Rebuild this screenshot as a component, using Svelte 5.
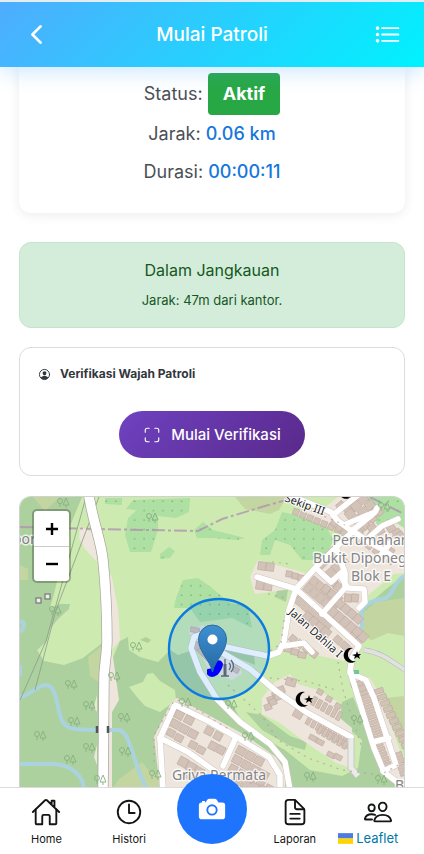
<script>
  const tabs = [
    { label: 'Home', icon: 'home' },
    { label: 'Histori', icon: 'time' },
    { label: 'Kamera', icon: 'camera' },
    { label: 'Laporan', icon: 'document' },
    { label: '', icon: 'people' }
  ];

  // Rows of houses: start point, step, count, house size, rotation
  const rows = [
    [341, 506, 8, 5, 2, 8, 8, -40], [350, 514, 7, 6, 3, 9, 8, -40], [356, 506, 7, 6, 3, 9, 8, -40], [363, 499, 7, 6, 3, 9, 8, -40],
    [380, 512, -7, 7, 4, 7, 6, -40], [372, 528, 8, 3, 2, 8, 7, -30], [391, 528, 6, 5, 2, 8, 7, -35], [384, 545, 8, -5, 3, 7, 6, -35],
    [362, 541, 7, 5, 5, 6, 6, 35], [370, 536, 7, 5, 4, 6, 6, 35],
    [296, 512, 7, 3, 7, 6, 6, 20], [334, 523, 5, 5, 3, 6, 6, 40], [262, 566, 8, 1, 2, 8, 8, 8], [260, 585, 8, 1, 2, 8, 9, 8], [289, 574, 6, 2, 3, 6, 6, 10],
    [322, 563, 6, -6, 3, 8, 9, -42], [331, 573, 6, -6, 3, 8, 9, -42],
    [308, 588, 6, 5, 5, 7, 9, 40], [314, 581, 6, 5, 4, 7, 8, 40], [326, 589, 6, 5, 3, 7, 8, 40], [333, 582, 5, 5, 2, 7, 8, 40],
    [299, 601, 7, 6, 5, 8, 8, 40], [308, 617, 6, 5, 4, 9, 8, 40], [333, 612, 6, 5, 6, 8, 9, 42], [340, 604, 6, 5, 4, 8, 8, 42], [348, 598, 7, 0, 2, 7, 8, 5],
    [293, 639, 7, 5, 4, 7, 7, 40], [288, 649, 7, 3, 3, 8, 6, 10], [338, 640, 7, 6, 2, 8, 7, 42], [352, 637, 5, 5, 2, 7, 7, 42],
    [271, 700, 5, -5, 3, 7, 7, -20], [268, 707, 5, -5, 3, 7, 6, -20], [291, 682, 6, 2, 1, 10, 8, 15], [298, 714, 6, 4, 1, 9, 8, 30],
    [314, 701, 5, 3, 6, 4, 9, 28], [309, 720, 5, 3, 9, 4, 10, 28], [320, 730, 5, 3, 6, 4, 8, 28], [313, 738, 7, 4, 2, 8, 5, 28], [331, 755, 7, 2, 2, 8, 5, 28], [320, 692, 9, 7, 3, 6, 5, 30],
    [357, 684, 3, 5, 3, 12, 5, -20], [364, 697, 2, 5, 9, 15, 4, -17], [377, 745, 2, 5, 5, 12, 4, -17], [379, 691, 3, 6, 12, 9, 5, -18], [398, 755, 2, 6, 4, 8, 5, -18],
    [179, 715, 10, 5, 2, 9, 8, 28], [175, 724, 9, 5, 3, 9, 8, 28], [171, 733, 8, 5, 2, 8, 7, 28], [193, 745, 8, 5, 2, 8, 7, 28],
    [209, 731, 9, 5, 2, 8, 8, 28], [213, 746, 8, 4, 2, 8, 8, 28], [183, 762, 8, 5, 3, 9, 9, 28], [190, 775, 9, 4, 3, 8, 9, 28],
    [241, 751, 9, 5, 3, 9, 8, 28], [237, 760, 9, 5, 4, 9, 8, 28], [233, 769, 9, 5, 5, 8, 8, 28], [236, 781, 9, 3, 4, 8, 8, 28],
    [195, 630, 7, 1, 1, 9, 5, 10], [197, 646, 5, 5, 3, 7, 7, 45], [236, 670, 3, -6, 2, 6, 5, 30]
  ];
  const houses = rows.flatMap(([x, y, dx, dy, n, w, h, a]) =>
    Array.from({ length: n }, (_, i) => ({ x: x + dx * i, y: y + dy * i, w, h, a }))
  );

  const trees = [
    [63, 503], [152, 518], [384, 507], [55, 611], [71, 685], [89, 706], [74, 722], [40, 736], [89, 748], [70, 760], [100, 780],
    [136, 647], [114, 677], [124, 718], [125, 752], [155, 775], [185, 703], [231, 705], [248, 737], [357, 720], [310, 777], [381, 780]
  ];

  const roads = [
    'M284 493L331 512L337 520L353 532', 'M333 515L358 495', 'M346 524L375 512L377 508', 'M352 531L374 513',
    'M353 531L366 540L380 548L404 564', 'M366 540L382 526L398 519', 'M376 562L390 543L404 540', 'M257 577L296 589', 'M296 589L318 565L352 532',
    'M296 589L325 615L359 646L352 658L350 671L362 710L374 748L384 772L402 786', 'M319 571L331 582L342 572',
    'M336 547L345 573L345 588L322 614', 'M340 575L348 588L364 589L365 602L359 608', 'M296 589L289 610L284 641',
    'M350 673L366 680L374 698L396 765L383 771', 'M373 742L389 738',
    'M284 641L279 652L268 656L244 651L208 643L202 634L194 637L191 648L200 672L217 699L240 722L270 744L285 762L290 790',
    'M214 648L250 669L276 691L306 712L351 737', 'M284 646L304 643L312 652',
    'M160 738L175 705L212 723L240 739L269 757L280 775L280 790', 'M160 738L163 790', 'M160 738L188 752L216 772', 'M236 737L223 766'
  ];

  const dots = [
    'M105 498L122 498L122 505L105 504Z', 'M133 500L190 498L189 512L176 518L158 516L158 530L151 552L130 552L125 535L128 518L137 510L126 509Z',
    'M160 554L169 547L175 551L170 558L160 559Z', 'M194 530L203 522L213 530L245 538L238 540L212 538L197 538Z',
    'M176 598L183 580L198 578L212 588L230 603L248 606L252 628L232 618L200 622L190 608L174 608Z',
    'M282 512L296 515L326 527L334 540L322 560L302 560L290 545L275 540L270 555L260 555L262 540L275 530Z',
    'M360 497L404 497L404 528L390 524L375 528L368 510Z'
  ];

  let active = $state('Home');
  let zoom = $state(1);
</script>

{#snippet icon(name)}
  <svg class="icon" viewBox="0 0 512 512" aria-hidden="true">
    {#if name === 'back'}
      <path stroke-width="48" d="M328 112L184 256l144 144" />
    {:else if name === 'list'}
      <path d="M160 144h288M160 256h288M160 368h288" />
      <circle cx="80" cy="144" r="16" /><circle cx="80" cy="256" r="16" /><circle cx="80" cy="368" r="16" />
    {:else if name === 'home'}
      <path d="M80 212v236a16 16 0 0016 16h96V328a24 24 0 0124-24h80a24 24 0 0124 24v136h96a16 16 0 0016-16V212" />
      <path d="M480 256L266.89 52c-5-5.28-16.69-5.34-21.78 0L32 256M400 179V64h-48v69" />
    {:else if name === 'time'}
      <circle cx="256" cy="256" r="192" /><path d="M256 128v144h96" />
    {:else if name === 'document'}
      <path d="M416 221.25V416a48 48 0 01-48 48H144a48 48 0 01-48-48V96a48 48 0 0148-48h98.75a32 32 0 0122.62 9.37l141.26 141.26a32 32 0 019.37 22.62z" />
      <path d="M256 56v120a32 32 0 0032 32h120M176 288h160M176 368h160" />
    {:else if name === 'people'}
      <path d="M402 168c-2.93 40.67-33.1 72-66 72s-63.12-31.32-66-72c-3-42.31 26.37-72 66-72s69 30.46 66 72z" />
      <path d="M336 304c-65.17 0-127.84 32.37-143.54 95.41-2.08 8.34 3.15 16.59 11.72 16.59h263.65c8.57 0 13.77-8.25 11.72-16.59C463.85 335.36 401.18 304 336 304z" />
      <path d="M200 185.94c-2.34 32.48-26.72 58.06-53 58.06s-50.7-25.57-53-58.06C91.61 152.15 115.34 128 147 128s55.39 24.77 53 57.94z" />
      <path d="M206 306c-18.05-8.27-37.93-11.45-59-11.45-52 0-102.1 25.85-114.65 76.2-1.65 6.66 2.53 13.25 9.37 13.25H154" />
    {:else if name === 'camera'}
      <g fill="currentColor" stroke="none">
        <circle cx="256" cy="272" r="64" />
        <path d="M432 144h-59c-3 0-6.72-1.94-9.62-5l-25.94-40.94a15.52 15.52 0 00-1.37-1.85C327.11 85.76 315 80 302 80h-92c-13 0-25.11 5.76-34.07 16.21a15.52 15.52 0 00-1.37 1.85l-25.94 41c-2.22 2.42-5.34 5-8.62 5v-8a16 16 0 00-16-16h-24a16 16 0 00-16 16v8h-4a48.05 48.05 0 00-48 48V384a48.05 48.05 0 0048 48h352a48.05 48.05 0 0048-48V192a48.05 48.05 0 00-48-48zM256 368a96 96 0 1196-96 96.11 96.11 0 01-96 96z" />
      </g>
    {:else if name === 'scan'}
      <path d="M336 448h56a56 56 0 0056-56v-56M448 176v-56a56 56 0 00-56-56h-56M176 448h-56a56 56 0 01-56-56v-56M64 176v-56a56 56 0 0156-56h56" />
    {:else if name === 'person'}
      <circle cx="256" cy="256" r="200" stroke-width="38" />
      <g fill="currentColor" stroke="none">
        <path d="M256 130c-46 0-78 34-75 80 3 44 36 82 75 82s72-38 75-82c3-46-29-80-75-80z" />
        <path d="M110 378c20-44 80-66 146-66s126 22 146 66c-32 48-86 78-146 78s-114-30-146-78z" />
      </g>
    {/if}
  </svg>
{/snippet}

<div class="app">
  <header>
    <button type="button" class="back" aria-label="Kembali">{@render icon('back')}</button>
    <h1>Mulai Patroli</h1>
    <button type="button" class="menu" aria-label="Daftar">{@render icon('list')}</button>
  </header>

  <main>
    <section class="status">
      <p>Status: <span class="badge">Aktif</span></p>
      <p>Jarak: <strong>0.06 km</strong></p>
      <p>Durasi: <strong>00:00:11</strong></p>
    </section>

    <section class="alert" role="status">
      <h2>Dalam Jangkauan</h2>
      <p>Jarak: 47m dari kantor.</p>
    </section>

    <section class="verify">
      <h3>{@render icon('person')}Verifikasi Wajah Patroli</h3>
      <button type="button">{@render icon('scan')}Mulai Verifikasi</button>
    </section>

    <section class="map" aria-label="Peta">
      <svg class="tiles" viewBox="20 497 384 290" preserveAspectRatio="xMidYMin slice">
        <defs>
          <pattern id="dots" width="9.4" height="9.4" patternUnits="userSpaceOnUse">
            <circle cx="3" cy="3" r=".6" fill="#55915a" />
          </pattern>
          <linearGradient id="pin" x1="0" y1="0" x2="0" y2="1">
            <stop offset="0" stop-color="#4090cf" /><stop offset="1" stop-color="#2369a5" />
          </linearGradient>
        </defs>
        <rect x="0" y="480" width="440" height="320" fill="#cdebb0" />

        <g fill="#add19e">
          <path d="M20 497H82L70 526L62 560L55 590L50 608L60 604L70 604L69 609L58 619L50 629L47 641L37 650L44 661L64 665L83 658L106 640V790H20Z" />
          <path d="M111 662L120 641L128 637L129 650L140 657L158 662L170 650L178 655L190 651L217 697L230 700L242 722L262 737L285 750L310 770L342 776L358 768L362 740L340 722L342 702L353 697L386 775L404 790H108Z" />
          <path d="M404 575L385 590L362 610L362 630L404 628Z" />
          <path d="M246 712L262 715L290 736L307 742L305 750L290 746L262 730Z" />
          <path d="M213 640L254 655L255 665L230 655Z" />
          <path d="M278 588L288 590L286 602L275 597Z" />
          <path d="M140 640L146 637L151 640L148 643Z" />
        </g>
        <path fill="#cdebb0" d="M129 687L143 682L147 674L153 673L160 681L175 690L176 700L160 712L145 706L137 697Z" />
        <g fill="#c3d5a0">
          <path d="M235 497H287L279 510L270 514L245 509Z" />
          <path d="M404 598L376 602L364 612L358 631L374 642L404 636Z" />
          <path d="M386 698L404 696V750L395 730Z" />
          <path d="M88 657L103 645V685L90 676Z" />
          <path d="M33 497H60L45 511Z" /><path d="M20 565L28 569V580H20Z" />
          <path d="M118 780L142 762L150 772L165 778V790H112Z" />
        </g>
        <path fill="#cdebb0" d="M370 641L388 633L404 636V668L385 655Z" />
        {#each dots as d}
          <path {d} fill="#aedfa3" /><path {d} fill="url(#dots)" />
        {/each}

        <g fill="#eee6dd">
          <path d="M80 526L95 534L97 562L85 549L79 538Z" /><path d="M106 564L112 578L118 609L120 640L112 650L119 700L112 712V790H106Z" />
          <path d="M97 695V712L94 707Z" /><path d="M97 745V765L94 757Z" />
          <path d="M290 512L325 507L338 497H366L377 525L395 522L404 528V573L394 574L366 597L358 609L362 632L354 652L344 661L320 656L284 651L280 640L286 610L296 590L316 563L336 542L350 530L320 524Z" />
          <path d="M258 560L305 573L298 588L255 594L250 577Z" />
          <path d="M262 698L275 682L290 674L298 684L318 690L340 703L341 719L352 728V768L336 763L305 742L280 723L262 714Z" />
          <path d="M154 737L171 703L177 698L212 717L245 735L276 757L286 772L285 790H160Z" />
          <path d="M352 673L370 678L380 695L404 762V785L384 773Z" />
          <path d="M188 630L204 625L208 640L216 655L240 664L242 674L232 680L210 672Z" />
        </g>

        <g fill="none" stroke="#aad3df" stroke-width="4">
          <path d="M20 697C30 696 38 684 47 685C57 687 57 709 61 718C65 731 77 729 96 730H118C130 731 129 751 146 788" />
          <path d="M20 764H54C72 765 83 776 84 789" />
          <path d="M404 576C393 582 394 594 386 598C373 601 364 602 361 614C364 626 361 632 352 638" />
          <path d="M20 632C26 627 24 618 20 623M20 665V676" />
        </g>

        <g fill="none" stroke="#8a9a86" stroke-width=".8">
          <path d="M86 497L46 641L20 700M99 497L56 610L35 690" />
        </g>
        <g fill="#eee" stroke="#777" stroke-width="1.2">
          <rect x="36" y="598" width="5" height="5" /><rect x="45" y="594" width="5" height="5" />
        </g>
        <path d="M20 527L98 529L198 531L222 519L265 506L297 497M370 497L404 514" fill="none" stroke="#b392b1" stroke-opacity=".8" stroke-width="2" stroke-dasharray="13 3 3 3" />

        <path d="M364 650C380 652 390 660 405 670" fill="none" stroke="#b8b8b8" stroke-width="5" /><path d="M364 650C380 652 390 660 405 670" fill="none" stroke="#e1e1df" stroke-width="4" />
        <g fill="none" stroke="#cfc4c0" stroke-width="6.6" stroke-linejoin="round" stroke-linecap="round">
          {#each roads as d}<path {d} />{/each}
        </g>
        <g fill="#d3c2b7" stroke="#bba99d" stroke-width=".6">
          {#each houses as h}
            <rect x={h.x - h.w / 2} y={h.y - h.h / 2} width={h.w} height={h.h} transform="rotate({h.a} {h.x} {h.y})" />
          {/each}
        </g>
        <g fill="none" stroke="#fff" stroke-width="5.6" stroke-linejoin="round" stroke-linecap="round">
          {#each roads as d}<path {d} />{/each}
        </g>
        <path d="M351 738L351 768L358 776" fill="none" stroke="#c8c8c6" stroke-width="7" /><path d="M351 738L351 768L358 776" fill="none" stroke="#ebebe9" stroke-width="5" />
        <g fill="none" stroke="#b99" stroke-opacity=".75" stroke-width="1.2" stroke-dasharray="2 5">
          <path d="M228 685L262 716L278 740L308 758L342 770L380 775L404 762M270 678L305 681L336 690" />
          <path d="M272 562L290 564M268 594L285 598M284 620L281 644L268 652M292 503L345 525M338 662L343 690L361 745" />
          <path d="M154 762L154 735L174 701L182 700L230 730" />
        </g>
        <g fill="none" stroke-linejoin="round">
          <path d="M88 490C92 520 101 540 103 560C106 590 107 620 107 640C107 655 104 665 104 680L103 790" stroke="#aaa49f" stroke-width="11" />
          <path d="M88 490C92 520 101 540 103 560C106 590 107 620 107 640C107 655 104 665 104 680L103 790" stroke="#fff" stroke-width="9.6" />
        </g>
        <path d="M97 726V733M108 726V733" stroke="#555" stroke-width="2.5" />
        <rect x="354" y="670" width="5" height="4" fill="#70c797" />

        <g fill="none" stroke="#86b07f" stroke-width=".9">
          {#each trees as [x, y]}
            <path d="M{x - 3} {y + 4}V{y}M{x + 3} {y + 5}V{y + 2}M{x + 3} {y - 5}L{x} {y + 2}H{x + 6}Z" />
            <circle cx={x - 3} cy={y - 2} r="2.5" />
          {/each}
        </g>

        {#each [[304, 699], [352, 655], [347, 491]] as [x, y]}
          <g transform="translate({x} {y})" fill="#000">
            <path d="M1 -7A7.5 7.5 0 1 0 4 6A5.8 5.8 0 1 1 1 -7Z" />
            <path d="M5 -4L6 -1L9 -1L7 1L8 4L5 2L2 4L3 1L0 0L4 -1Z" />
          </g>
        {/each}
        <g fill="none" stroke="#666" stroke-width="1.3">
          <path d="M225 659V676M221 676H229M229 663Q232 666 229 670M231 660Q236 666 231 672" /><path d="M225 664V676" stroke-width="3" />
        </g>

        <g class="label">
          <text x="371" y="545" text-anchor="middle">Perumahan</text>
          <text x="371" y="563" text-anchor="middle">Bukit Diponegoro</text>
          <text x="371" y="581" text-anchor="middle">Blok E</text>
          <text x="219" y="780" text-anchor="middle">Griya Permata</text>
          <text x="395" y="790">B</text>
          <text x="13" y="544">oor</text>
        </g>
        <g class="street">
          <text transform="translate(284 501) rotate(20)">Sekip III</text>
          <text transform="translate(288 613) rotate(42)">Jalan Dahlia I</text>
        </g>

        <circle cx="219" cy="649" r="50" fill="#007bff" fill-opacity=".13" stroke="#0c7be0" stroke-width="2.4" />
        <path d="M208 670L213 669L217 662Q220 660 222 664Q222 668 217 674Q211 678 208 674Z" fill="#00f" stroke="#00f" stroke-width="2" stroke-linejoin="round" />
        <path d="M212.500 672C210 660 198.500 652 198.500 639A14 14 0 0 1 226.500 639C226.500 652 215 660 212.500 672Z" fill="url(#pin)" stroke="#2b6da3" stroke-width="1" />
        <circle cx="212.500" cy="639.500" r="5" fill="#fff" />
      </svg>

      <div class="zoom">
        <button type="button" aria-label="Perbesar" onclick={() => zoom++}>
          <svg viewBox="0 0 14 14" aria-hidden="true"><path d="M1 7H13M7 1V13" /></svg>
        </button>
        <button type="button" aria-label="Perkecil" onclick={() => zoom--}>
          <svg viewBox="0 0 14 14" aria-hidden="true"><path d="M1 7H13" /></svg>
        </button>
      </div>
    </section>
  </main>

  <nav>
    {#each tabs as tab}
      {#if tab.icon === 'camera'}
        <button type="button" class="camera" aria-label={tab.label}>{@render icon('camera')}</button>
      {:else if tab.icon === 'people'}
        <div class="tab">
          <a href="#tim" aria-label="Tim">{@render icon('people')}</a>
          <a class="leaflet" href="#leaflet">
            <svg viewBox="0 0 14 10" aria-hidden="true"><path fill="#4c7be1" d="M0 0h14v5H0z" /><path fill="#ffd500" d="M0 5h14v5H0z" /></svg>
            Leaflet
          </a>
        </div>
      {:else}
        <a class="tab" href="#{tab.icon}" onclick={() => (active = tab.label)}>
          {@render icon(tab.icon)}
          <span>{tab.label}</span>
        </a>
      {/if}
    {/each}
  </nav>
</div>

<style>
  :global(body) {
    margin: 0;
    background: #fff;
    font-family: Inter, 'Liberation Sans', sans-serif;
  }
  h1, h2, h3, p {
    margin: 0;
    font-weight: 400;
  }
  button {
    border: 0;
    padding: 0;
    font: inherit;
    color: inherit;
    background: none;
    cursor: pointer;
  }
  a {
    color: inherit;
    text-decoration: none;
  }
  .icon {
    display: block;
    fill: none;
    stroke: currentColor;
    stroke-width: 32;
    stroke-linecap: round;
    stroke-linejoin: round;
  }
  .app {
    display: flex;
    flex-direction: column;
    height: 100vh;
    overflow: hidden;
  }

  header {
    position: relative;
    z-index: 2;
    display: flex;
    align-items: center;
    justify-content: space-between;
    padding: 0 22px;
    line-height: 65px;
    border-top: 2px solid #e4eef2;
    color: #fff;
    background: linear-gradient(135deg, #4facfe 0%, #00f2fe 100%);
    background-origin: border-box;
    background-clip: padding-box;
    box-shadow: 0 4px 20px rgba(79, 172, 254, 0.3);
  }
  h1 {
    font-size: 19px;
    font-weight: 500;
  }
  .back .icon, .menu .icon {
    width: 29px;
    height: 29px;
  }

  main {
    flex: 1;
    min-height: 0;
    display: flex;
    flex-direction: column;
    padding: 0 19px;
  }
  .status {
    padding: 6px 16px 22px;
    border-radius: 0 0 12px 12px;
    box-shadow: 0 2px 12px rgba(0, 0, 0, 0.08);
    text-align: center;
    font-size: 18px;
    line-height: 38px;
    color: #4b4f54;
  }
  .badge {
    display: inline-block;
    padding: 0 15px;
    border-radius: 4px;
    line-height: 42px;
    font-weight: 700;
    color: #fff;
    background: #28a745;
  }
  .status strong {
    font-weight: 500;
    color: #1677dc;
  }

  .alert {
    margin-top: 29px;
    padding: 14px 16px 16px;
    border: 1px solid #c3e6cb;
    border-radius: 12px;
    text-align: center;
    color: #155724;
    background: #d4edda;
  }
  .alert h2 {
    font-size: 16px;
    line-height: 26px;
  }
  .alert p {
    margin-top: 6px;
    font-size: 13px;
    line-height: 22px;
  }

  .verify {
    margin-top: 19px;
    padding: 16px 18px 17px;
    border: 1px solid #dcdcde;
    border-radius: 12px;
  }
  .verify h3 {
    display: flex;
    align-items: center;
    gap: 9px;
    font-size: 12px;
    font-weight: 700;
    line-height: 20px;
    color: #32373c;
  }
  .verify h3 .icon {
    width: 13px;
    height: 13px;
  }
  .verify button {
    display: flex;
    align-items: center;
    gap: 10px;
    margin: 27px auto 0;
    padding: 0 24px;
    border-radius: 24px;
    font-size: 15px;
    font-weight: 500;
    line-height: 47px;
    color: #fff;
    background: linear-gradient(135deg, #6f42c1, #59298a);
  }
  .verify button .icon {
    width: 18px;
    height: 18px;
  }

  .map {
    position: relative;
    flex: 1;
    min-height: 0;
    margin-top: 20px;
    border: 1px solid #cfd2cf;
    border-bottom: 0;
    border-radius: 12px 12px 0 0;
    overflow: hidden;
  }
  .tiles {
    display: block;
    width: 100%;
    height: 100%;
  }
  .label {
    font: 14px 'Noto Sans', sans-serif;
    fill: #858585;
    stroke: rgba(255, 255, 255, 0.75);
    stroke-width: 3;
    stroke-linejoin: round;
    paint-order: stroke;
  }
  .street {
    font: 11px 'Noto Sans', sans-serif;
    fill: #222;
    stroke: #fff;
    stroke-width: 2;
    paint-order: stroke;
  }
  .zoom {
    position: absolute;
    top: 12px;
    left: 12px;
    border: 2px solid rgba(0, 0, 0, 0.25);
    border-radius: 5px;
    background: #fff;
    background-clip: padding-box;
  }
  .zoom button {
    display: grid;
    place-items: center;
    width: 35px;
    height: 35px;
  }
  .zoom button + button {
    border-top: 1px solid #ccc;
  }
  .zoom svg {
    width: 14px;
    height: 14px;
    stroke: #000;
    stroke-width: 2.4;
  }

  nav {
    position: relative;
    z-index: 2;
    display: grid;
    grid-template-columns: repeat(5, 1fr);
    padding: 9px 5px 5px;
    border-top: 1px solid #dcdce0;
    background: #fff;
    color: #141515;
  }
  .tab {
    display: flex;
    flex-direction: column;
    align-items: center;
    font-size: 11px;
    line-height: 20px;
  }
  .tab .icon {
    width: 30px;
    height: 30px;
  }
  .tab span {
    margin-top: 2px;
  }
  .leaflet {
    display: flex;
    align-items: center;
    align-self: flex-start;
    gap: 3px;
    margin-top: 2px;
    padding-left: 2px;
    font-size: 13px;
    line-height: 18px;
    color: #0078a8;
  }
  .leaflet svg {
    width: 15px;
    height: 11px;
  }
  .camera {
    justify-self: center;
    display: grid;
    place-items: center;
    width: 70px;
    height: 70px;
    margin: -23px 0 -8px;
    border-radius: 50%;
    color: #fff;
    background: #1e74fd;
  }
  .camera .icon {
    width: 30px;
    height: 30px;
  }
</style>
